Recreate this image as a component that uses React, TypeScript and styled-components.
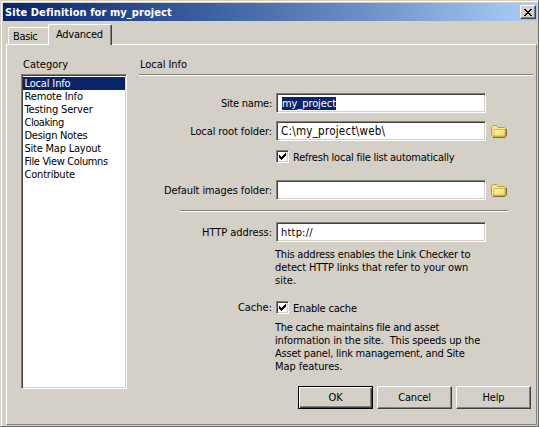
import React from 'react';
import styled, { createGlobalStyle, css } from 'styled-components';

const Global = createGlobalStyle`
  * { box-sizing: border-box; }
  body { margin: 0; background: #d4d0c8; overflow: hidden; }
`;

const sunken = css`
  background: #fff;
  border: 1px solid;
  border-color: #808080 #fff #fff #808080;
  box-shadow: inset 1px 1px 0 #404040, inset -1px -1px 0 #d4d0c8;
`;

const Dialog = styled.div`
  width: 539px;
  height: 427px;
  padding: 2px 1px 1px 2px;
  background: #d4d0c8;
  border: 1px solid;
  border-color: #d4d0c8 #6a6a68 #6a6a68 #d4d0c8;
  box-shadow: inset 1px 1px 0 #fff;
  font: 11px/13px 'DejaVu Sans Condensed', 'DejaVu Sans', sans-serif;
  font-stretch: condensed;
  color: #000;
  white-space: pre;
  display: flex;
  flex-direction: column;
`;

const TitleBar = styled.div`
  height: 18px;
  flex: none;
  display: flex;
  align-items: center;
  justify-content: space-between;
  padding: 0 1px 0 2px;
  background: linear-gradient(90deg, #0a246a, #3c5f9f 38%, #6b8ec5 67%, #a0c4ee 94%, #a6caf0);
  color: #fff;
  font-weight: bold;
`;

const Text = styled.span<{ $ls?: number }>`
  letter-spacing: ${p => p.$ls ?? -0.15}px;
`;

const CloseButton = styled.button`
  width: 16px;
  height: 14px;
  padding: 0;
  display: flex;
  align-items: center;
  justify-content: center;
  background: #d4d0c8;
  border: 1px solid;
  border-color: #fff #404040 #404040 #fff;
  box-shadow: inset -1px -1px 0 #808080;
`;

const Tabs = styled.div`
  height: 23px;
  flex: none;
  display: flex;
  align-items: flex-end;
  padding-left: 5px;
`;

const Tab = styled.div<{ $active?: boolean }>`
  width: ${p => (p.$active ? 64 : 40)}px;
  height: ${p => (p.$active ? 21 : 17)}px;
  padding: ${p => (p.$active ? '3px 0 0 7px' : '2px 0 0 4px')};
  margin-bottom: ${p => (p.$active ? -1 : 0)}px;
  border: 1px solid #fff;
  border-bottom: 0;
  border-right: ${p => (p.$active ? '1px solid #404040' : '0')};
  box-shadow: ${p => (p.$active ? 'inset -1px 0 0 #808080' : 'none')};
  border-radius: 2px 2px 0 0;
  background: #d4d0c8;
  z-index: 1;
`;

const Panel = styled.div`
  flex: none;
  width: 531px;
  height: 381px;
  margin-left: 3px;
  border: 1px solid;
  border-color: #fff #808080 #808080 #fff;
  display: flex;
  padding: 13px 3px 0 14px;
`;

const Sidebar = styled.div`
  width: 106px;
  flex: none;
`;

const SideTitle = styled.div`
  height: 16px;
  padding-left: 2px;
`;

const List = styled.div`
  ${sunken}
  height: 315px;
  padding: 2px 1px 1px;
`;

const Item = styled.div<{ $selected?: boolean }>`
  height: 13px;
  padding-left: 1.5px;
  color: ${p => (p.$selected ? '#fff' : '#000')};
  background: ${p => (p.$selected ? '#0a246a' : 'transparent')};
`;

const Main = styled.div`
  margin-left: 12px;
  width: 394px;
  flex: none;
  height: 365px;
  display: flex;
  flex-direction: column;
`;

const Heading = styled.div`
  height: 18px;
  flex: none;
  border-bottom: 1px solid #fff;
  box-shadow: inset 0 -1px 0 #808080;
  padding-left: 1px;
`;

const Row = styled.div<{ $gap: number; $h?: number }>`
  display: grid;
  grid-template-columns: 133px 210px 22px;
  column-gap: 4px;
  height: ${p => p.$h ?? 20}px;
  margin-top: ${p => p.$gap}px;
  flex: none;
  align-items: center;
`;

const Label = styled.div`
  text-align: right;
`;

const Input = styled.div`
  ${sunken}
  height: 20px;
  padding: 3px 0 0 4px;
`;

const PathInput = styled(Input)`
  font-size: 11.5px;
`;

const Selection = styled.span`
  display: inline-block;
  height: 13px;
  margin-left: 1px;
  background: #0a246a;
  color: #fff;
`;

const CheckLine = styled.div`
  display: flex;
  align-items: center;
  gap: 4px;
`;

const CheckCaption = styled.div`
  padding-top: 1px;
  margin-bottom: -1px;
`;

const CheckBox = styled.div`
  ${sunken}
  width: 13px;
  height: 13px;
  padding: 1px;
  svg { display: block; }
`;

const Divider = styled.div`
  height: 2px;
  flex: none;
  margin: 10px 25px 0 41px;
  background: #808080;
  border-bottom: 1px solid #fff;
`;

const Note = styled.div<{ $gap: number }>`
  margin: ${p => p.$gap}px 0 0 136px;
  flex: none;
`;

const NoteLine = styled.div<{ $ls?: number }>`
  height: 13px;
  letter-spacing: ${p => p.$ls ?? -0.15}px;
`;

const Buttons = styled.div`
  display: flex;
  gap: 4px;
  margin: 13px 0 0 159px;
  flex: none;
`;

const Button = styled.button<{ $default?: boolean }>`
  width: 75px;
  height: 23px;
  padding: 0 0 1px;
  font: inherit;
  color: #000;
  background: #d4d0c8;
  border: 1px solid;
  border-color: ${p => (p.$default ? '#000' : '#fff #404040 #404040 #fff')};
  box-shadow: ${p =>
    p.$default
      ? 'inset 1px 1px 0 #fff, inset -1px -1px 0 #404040, inset -2px -2px 0 #808080'
      : 'inset -1px -1px 0 #808080'};
`;

const Check = () => (
  <CheckBox>
    <svg width="9" height="9" viewBox="0 0 9 9" shapeRendering="crispEdges">
      <path d="M1 3h1v1h1v1h1v-1h1v-1h1v-1h1v-1h1v3h-1v1h-1v1h-1v1h-1v1h-1v-1h-1v-1h-1z" />
    </svg>
  </CheckBox>
);

const Folder = () => (
  <svg width="18" height="15" viewBox="0 0 18 15">
    <defs>
      <linearGradient id="folder" x1="0" y1="0" x2="1" y2="1">
        <stop offset="0" stopColor="#fffcc4" />
        <stop offset="1" stopColor="#f3d255" />
      </linearGradient>
    </defs>
    <path d="M3 13.4h11.5l1.8-1.8V5" fill="none" stroke="#6b6038" strokeWidth="1.1" />
    <path d="M1.5 11V3.3L3 1.5h3.3L8 3.5h6.5l1 1.2v7.3l-1 .8H3.2z" fill="#fbe98a" stroke="#b8952f" strokeWidth=".9" />
    <path d="M4 5.5h11v6.6H4z" fill="url(#folder)" stroke="#cfaa40" strokeWidth=".8" />
  </svg>
);

const categories: [string, number?][] = [
  ['Local Info'], ['Remote Info'], ['Testing Server'], ['Cloaking', -0.45],
  ['Design Notes', -0.25], ['Site Map Layout', -0.22], ['File View Columns', -0.35], ['Contribute', -0.2],
];

const checkerNote: [string, number?][] = [
  ['This address enables the Link Checker to', -0.2],
  ['detect HTTP links that refer to your own', -0.12],
  ['site.', 0],
];

const cacheNote: [string, number?][] = [
  ['The cache maintains file and asset', -0.24],
  ['information in the site.  This speeds up the', -0.17],
  ['Asset panel, link management, and Site', -0.22],
  ['Map features.', -0.05],
];

export default function App() {
  return (
    <>
      <Global />
      <Dialog>
        <TitleBar>
          <Text $ls={0.08}>Site Definition for my_project</Text>
          <CloseButton aria-label="Close">
            <svg width="8" height="7" viewBox="0 0 8 7" shapeRendering="crispEdges">
              <path d="M0 0h2v1h1v1h2v-1h1v-1h2v1h-1v1h-1v1h-1v1h1v1h1v1h1v1h-2v-1h-1v-1h-2v1h-1v1h-2v-1h1v-1h1v-1h1v-1h-1v-1h-1v-1h-1z" />
            </svg>
          </CloseButton>
        </TitleBar>
        <Tabs>
          <Tab><Text $ls={-0.35}>Basic</Text></Tab>
          <Tab $active><Text $ls={-0.25}>Advanced</Text></Tab>
        </Tabs>
        <Panel>
          <Sidebar>
            <SideTitle><Text $ls={0}>Category</Text></SideTitle>
            <List>
              {categories.map(([name, ls], i) => (
                <Item key={name} $selected={i === 0}><Text $ls={ls}>{name}</Text></Item>
              ))}
            </List>
          </Sidebar>
          <Main>
            <Heading><Text $ls={-0.05}>Local Info</Text></Heading>
            <Row $gap={17}>
              <Label><Text $ls={-0.25}>Site name:</Text></Label>
              <Input><Selection><Text $ls={-0.08}>my_project</Text></Selection></Input>
            </Row>
            <Row $gap={8}>
              <Label><Text $ls={-0.1}>Local root folder:</Text></Label>
              <PathInput><Text $ls={0.25}>C:\my_project\web\</Text></PathInput>
              <Folder />
            </Row>
            <Row $gap={9} $h={13}>
              <span />
              <CheckLine>
                <Check />
                <CheckCaption><Text $ls={-0.23}>Refresh local file list automatically</Text></CheckCaption>
              </CheckLine>
            </Row>
            <Row $gap={17}>
              <Label><Text $ls={-0.1}>Default images folder:</Text></Label>
              <Input />
              <Folder />
            </Row>
            <Divider />
            <Row $gap={10}>
              <Label><Text $ls={-0.05}>HTTP address:</Text></Label>
              <Input><Text $ls={0.2}>http://</Text></Input>
            </Row>
            <Note $gap={6}>
              {checkerNote.map(([line, ls]) => <NoteLine key={line} $ls={ls}>{line}</NoteLine>)}
            </Note>
            <Row $gap={14} $h={13}>
              <Label><Text $ls={0}>Cache:</Text></Label>
              <CheckLine>
                <Check />
                <CheckCaption><Text $ls={-0.2}>Enable cache</Text></CheckCaption>
              </CheckLine>
            </Row>
            <Note $gap={7}>
              {cacheNote.map(([line, ls]) => <NoteLine key={line} $ls={ls}>{line}</NoteLine>)}
            </Note>
            <Buttons>
              <Button $default><Text>OK</Text></Button>
              <Button><Text>Cancel</Text></Button>
              <Button><Text>Help</Text></Button>
            </Buttons>
          </Main>
        </Panel>
      </Dialog>
    </>
  );
}
